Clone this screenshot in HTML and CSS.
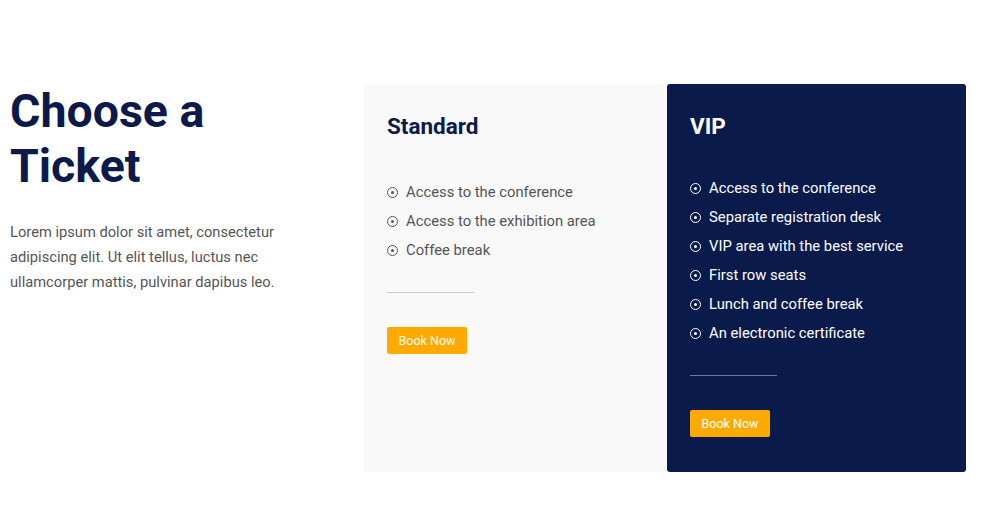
FILE: index.html
```html
<!DOCTYPE html>
<html>
<head>
    <link rel="stylesheet" href="styles.css">
</head>
<body>
    <section class="tickets">
        <div class="intro">
            <h1 class="intro-title">Choose a Ticket</h1>
            <p class="intro-text">Lorem ipsum dolor sit amet, consectetur adipiscing elit. Ut elit tellus, luctus nec ullamcorper mattis, pulvinar dapibus leo.</p>
        </div>

        <div class="plans">
            <div class="plan plan-standard">
                <h2 class="plan-title">Standard</h2>
                <ul class="plan-features">
                    <li><span class="dot"></span>Access to the conference</li>
                    <li><span class="dot"></span>Access to the exhibition area</li>
                    <li><span class="dot"></span>Coffee break</li>
                </ul>
                <div class="plan-rule"></div>
                <button class="book-button">Book Now</button>
            </div>

            <div class="plan plan-vip">
                <h2 class="plan-title">VIP</h2>
                <ul class="plan-features">
                    <li><span class="dot"></span>Access to the conference</li>
                    <li><span class="dot"></span>Separate registration desk</li>
                    <li><span class="dot"></span>VIP area with the best service</li>
                    <li><span class="dot"></span>First row seats</li>
                    <li><span class="dot"></span>Lunch and coffee break</li>
                    <li><span class="dot"></span>An electronic certificate</li>
                </ul>
                <div class="plan-rule"></div>
                <button class="book-button">Book Now</button>
            </div>
        </div>
    </section>
</body>
</html>
```

FILE: styles.css
```css
body {
    margin: 0;
    font-family: Roboto, "Liberation Sans", sans-serif;
    background: #fff;
}
.tickets {
    display: flex;
    align-items: flex-start;
    padding: 84px 34px 0 10px;
}
.intro {
    width: 300px;
    margin-right: 54px;
}
.intro-title {
    margin: 0;
    font-size: 46.5px;
    line-height: 55px;
    font-weight: 700;
    color: #0c1a4b;
}
.intro-text {
    margin: 26px 0 0;
    font-size: 14.7px;
    line-height: 25px;
    color: #555;
}
.plans {
    display: flex;
    flex: 1;
}
.plan {
    height: 388px;
    box-sizing: border-box;
    padding: 29px 23px;
}
.plan-standard {
    width: 303px;
    background: #f9f9f9;
    color: #555;
}
.plan-vip {
    width: 299px;
    background: #0a1a4a;
    color: #fff;
    border-radius: 3px;
}
.plan-title {
    margin: 0;
    font-size: 22.5px;
    line-height: 1.2;
    font-weight: 700;
    color: #0c1a4b;
}
.plan-vip .plan-title {
    color: #fff;
}
.plan-features {
    list-style: none;
    margin: 34px 0 0;
    padding: 0;
    font-size: 14.8px;
    line-height: 29px;
}
.plan-standard .plan-features {
    margin-top: 38px;
}
.plan-features li {
    display: flex;
    align-items: center;
}
.dot {
    width: 11px;
    height: 11px;
    box-sizing: border-box;
    border: 1.3px solid currentColor;
    border-radius: 50%;
    margin-right: 8px;
    position: relative;
    flex-shrink: 0;
}
.dot::after {
    content: "";
    position: absolute;
    left: 50%;
    top: 50%;
    width: 3px;
    height: 3px;
    margin: -1.5px 0 0 -1.5px;
    border-radius: 50%;
    background: currentColor;
}
.plan-rule {
    width: 87px;
    height: 1px;
    margin-top: 27px;
    background: #c8c8c8;
}
.plan-vip .plan-rule {
    background: #6b7599;
}
.book-button {
    display: block;
    margin-top: 34px;
    padding: 6px 11.5px;
    border: none;
    border-radius: 2px;
    background: #ffaa00;
    color: #fff;
    font-family: inherit;
    font-size: 12.5px;
    line-height: 15px;
    cursor: pointer;
}
```
